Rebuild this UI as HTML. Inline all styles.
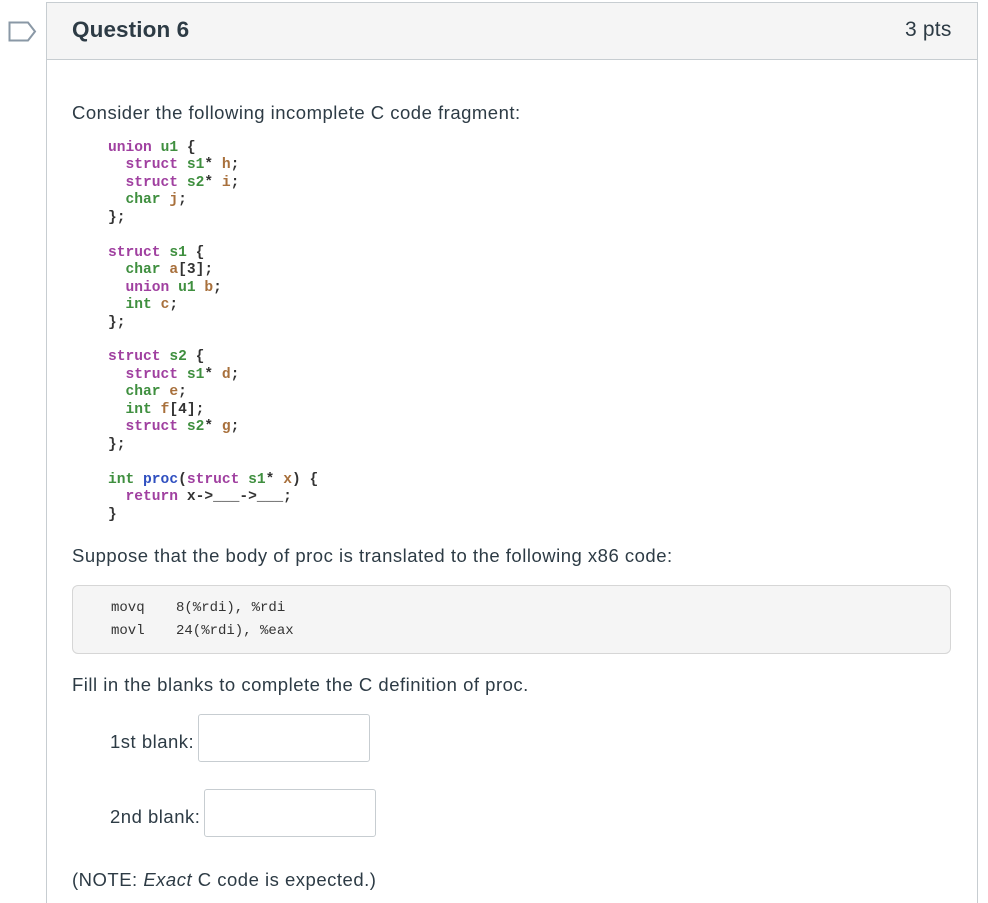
<!DOCTYPE html>
<html><head><style>
body{margin:0;width:988px;height:897px;background:#fff;position:relative;overflow:hidden;font-family:"Liberation Sans",sans-serif;color:#2d3b45}
.a{position:absolute;white-space:pre}
.panel{position:absolute;left:46px;top:2px;width:930px;height:900px;border:1px solid #c7cdd1;border-bottom:none}
.hdr{position:absolute;left:0;top:0;width:930px;height:56px;background:#f5f5f5;border-bottom:1px solid #c7cdd1}
.t{font-size:18.5px;letter-spacing:0.5px}
.code{position:absolute;left:108px;top:140px;font-family:"Liberation Mono",monospace;font-size:14.6px;line-height:17.45px;font-weight:bold;white-space:pre;color:#333}
.k{color:#a040a0}.g{color:#3f8f3f}.b{color:#a8703c}.bl{color:#3050c0}
.pre{position:absolute;left:72px;top:585px;width:877px;height:67px;background:#f5f5f5;border:1px solid #d6d6d6;border-radius:6px}
.asm{font-family:"Liberation Mono",monospace;font-size:14px;color:#333}
.in{position:absolute;width:170px;height:46px;border:1px solid #c7cdd1;border-radius:3px;background:#fff}
</style></head><body>
<svg class="a" style="left:8px;top:21px" width="30" height="21"><path d="M1.5 1.5H20L27 10.5L20 19.5H1.5Z" fill="none" stroke="#8a98a6" stroke-width="2"/></svg>
<div class="panel"><div class="hdr"></div></div>
<div class="a" style="left:72px;top:17px;font-size:22.5px;font-weight:bold;color:#2d3b45;letter-spacing:0.1px">Question 6</div>
<div class="a" style="left:905px;top:18px;font-size:21px;color:#2d3b45;letter-spacing:0.2px">3 pts</div>
<div class="a t" style="left:72px;top:102px">Consider the following incomplete C code fragment:</div>
<div class="code"><span class="k">union</span> <span class="g">u1</span> {
  <span class="k">struct</span> <span class="g">s1</span>* <span class="b">h</span>;
  <span class="k">struct</span> <span class="g">s2</span>* <span class="b">i</span>;
  <span class="g">char</span> <span class="b">j</span>;
};

<span class="k">struct</span> <span class="g">s1</span> {
  <span class="g">char</span> <span class="b">a</span>[3];
  <span class="k">union</span> <span class="g">u1</span> <span class="b">b</span>;
  <span class="g">int</span> <span class="b">c</span>;
};

<span class="k">struct</span> <span class="g">s2</span> {
  <span class="k">struct</span> <span class="g">s1</span>* <span class="b">d</span>;
  <span class="g">char</span> <span class="b">e</span>;
  <span class="g">int</span> <span class="b">f</span>[4];
  <span class="k">struct</span> <span class="g">s2</span>* <span class="b">g</span>;
};

<span class="g">int</span> <span class="bl">proc</span>(<span class="k">struct</span> <span class="g">s1</span>* <span class="b">x</span>) {
  <span class="k">return</span> x->___->___;
}</div>
<div class="a t" style="left:72px;top:545px">Suppose that the body of proc is translated to the following x86 code:</div>
<div class="pre"></div>
<div class="a asm" style="left:111px;top:600px">movq</div><div class="a asm" style="left:176px;top:600px">8(%rdi), %rdi</div>
<div class="a asm" style="left:111px;top:623px">movl</div><div class="a asm" style="left:176px;top:623px">24(%rdi), %eax</div>
<div class="a t" style="left:72px;top:674px">Fill in the blanks to complete the C definition of proc.</div>
<div class="a t" style="left:110px;top:731px">1st blank:</div>
<div class="in" style="left:198px;top:714px"></div>
<div class="a t" style="left:110px;top:806px">2nd blank:</div>
<div class="in" style="left:204px;top:789px"></div>
<div class="a t" style="left:72px;top:869px">(NOTE: <i>Exact</i> C code is expected.)</div>
</body></html>
